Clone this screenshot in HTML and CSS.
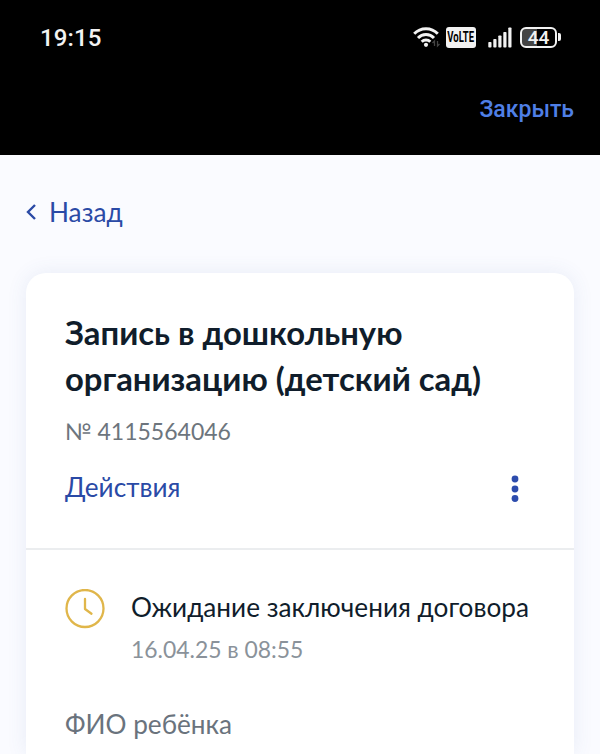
FILE: index.html
```
<!DOCTYPE html>
<html lang="ru">
<head>
    <meta charset="UTF-8">
    <meta name="viewport" content="width=device-width, initial-scale=1.0">
    <title>Запись в дошкольную организацию</title>
    <link rel="stylesheet" href="styles.css">
</head>
<body>
    <header class="top">
        <div class="status-bar">
            <span class="time">19:15</span>
            <div class="status-icons">
                <svg class="wifi" width="28" height="22" viewBox="0 0 28 22" fill="none" stroke="#f2f2f2" stroke-width="2.9">
                    <path d="M1.2 7.8a16.2 16.2 0 0 1 23.6 0"/>
                    <path d="M5 12a11 11 0 0 1 16 0"/>
                    <path d="M8.7 15.8a6 6 0 0 1 8.6 0"/>
                    <circle cx="13" cy="18.8" r="2.1" fill="#f2f2f2" stroke="none"/>
                    <path d="M21.5 20v-5l-2 2M24.5 15v5l2-2" stroke="#444" stroke-width="1.3"/>
                </svg>
                <div class="volte"><span>VoLTE</span></div>
                <svg class="signal" width="24" height="21" viewBox="0 0 24 21" fill="#f2f2f2">
                    <rect x="0.3" y="15" width="3.2" height="5.5" rx="0.8"/>
                    <rect x="5.3" y="12" width="3.2" height="8.5" rx="0.8"/>
                    <rect x="10.3" y="8.5" width="3.2" height="12" rx="0.8"/>
                    <rect x="15.3" y="5" width="3.2" height="15.5" rx="0.8"/>
                    <rect x="20.3" y="0.5" width="3.2" height="20" rx="0.8"/>
                </svg>
                <div class="battery">44</div>
                <div class="battery-tip"></div>
            </div>
        </div>
        <a class="close" href="#">Закрыть</a>
    </header>

    <main>
        <a class="back" href="#">
            <svg width="10" height="16" viewBox="0 0 10 16" fill="none" stroke="#2a4aa6" stroke-width="2.4">
                <path d="M9 1L2 8l7 7"/>
            </svg>
            <span>Назад</span>
        </a>

        <section class="card">
            <!-- Заголовок заявления -->
            <div class="card-head">
                <h1>Запись в дошкольную<br>организацию (детский сад)</h1>
                <p class="number">№ 4115564046</p>
                <div class="actions">
                    <a href="#">Действия</a>
                    <svg width="8" height="30" viewBox="0 0 8 30" fill="#2d4cad">
                        <circle cx="4" cy="7" r="3.4"/>
                        <circle cx="4" cy="17" r="3.4"/>
                        <circle cx="4" cy="26.5" r="3.4"/>
                    </svg>
                </div>
            </div>

            <!-- Статус и данные -->
            <div class="card-body">
                <div class="status">
                    <svg width="40" height="40" viewBox="0 0 40 40" fill="none" stroke="#e0b64a" stroke-width="2.3" stroke-linecap="round" stroke-linejoin="round">
                        <circle cx="20" cy="19.5" r="18.5"/>
                        <path d="M20 10v10l6.5 4.7"/>
                    </svg>
                    <div>
                        <p class="status-title">Ожидание заключения договора</p>
                        <p class="status-date">16.04.25 в 08:55</p>
                    </div>
                </div>
                <p class="field-label">ФИО ребёнка</p>
            </div>
        </section>
    </main>
</body>
</html>
```
FILE: styles.css
```
* {
    box-sizing: border-box;
}

body {
    margin: 0;
    height: 754px;
    overflow: hidden;
    background-color: #fafbff;
    font-family: Lato, sans-serif;
    font-size: 26.2px;
    color: #101d2b;
}

a {
    color: #2a4aa6;
    text-decoration: none;
}

h1,
p {
    margin: 0;
}

/* Верхняя панель */
.top {
    display: flex;
    flex-direction: column;
    height: 155px;
    background-color: #000;
}

.status-bar {
    display: flex;
    justify-content: space-between;
    align-items: center;
    height: 74px;
    padding: 0 39px 0 40px;
    color: #f2f2f2;
}

.time {
    padding-top: 2px;
    font: 500 24px Roboto, sans-serif;
    letter-spacing: 0.1px;
}

.status-icons {
    display: flex;
    align-items: center;
}

.volte {
    display: flex;
    justify-content: center;
    width: 30px;
    height: 21px;
    margin: 0 12px 0 5px;
    border-radius: 3px;
    background-color: #f2f2f2;
    color: #000;
    font: bold 14px/21px Roboto, sans-serif;
}

.volte span {
    transform: scaleX(0.68);
}

.battery {
    width: 37px;
    height: 21px;
    margin-left: 8px;
    border: 2px solid #f2f2f2;
    border-radius: 6px;
    background: linear-gradient(to right, #444 44%, #000 44%);
    font: 500 19px/18px Roboto, sans-serif;
    text-align: center;
}

.battery-tip {
    width: 3px;
    height: 8px;
    margin-left: 1px;
    border-radius: 0 2px 2px 0;
    background-color: #f2f2f2;
}

.close {
    align-self: flex-end;
    margin: 21px 26px 0 0;
    color: #4f7fe6;
    font: 500 23px/30px Roboto, sans-serif;
}

.back {
    display: flex;
    align-items: center;
    gap: 13px;
    width: 130px;
    height: 32px;
    margin: 41px 0 0 26px;
}

/* Карточка */
.card {
    height: 481px;
    margin: 45px 26px 0;
    border-radius: 20px 20px 0 0;
    background-color: #fff;
    box-shadow: 0 0 20px rgba(70, 100, 170, 0.1);
}

.card-head {
    height: 277px;
    padding: 37px 55px 0 39px;
    border-bottom: 2px solid #ebedef;
}

h1 {
    font-size: 32.8px;
    line-height: 46px;
    white-space: nowrap;
}

.number {
    margin-top: 13px;
    color: #6d757d;
    font-size: 23px;
    line-height: 32px;
}

.actions {
    display: flex;
    justify-content: space-between;
    align-items: center;
    height: 38px;
    margin-top: 21px;
}

.card-body {
    padding: 39px 39px 0;
}

.status {
    display: flex;
    gap: 26px;
}

.status-title {
    line-height: 36px;
    white-space: nowrap;
}

.status-date {
    margin-top: 8px;
    color: #8a929a;
    font-size: 22.9px;
    line-height: 32px;
}

.field-label {
    margin-top: 40px;
    color: #6a737d;
    line-height: 38px;
}
```
